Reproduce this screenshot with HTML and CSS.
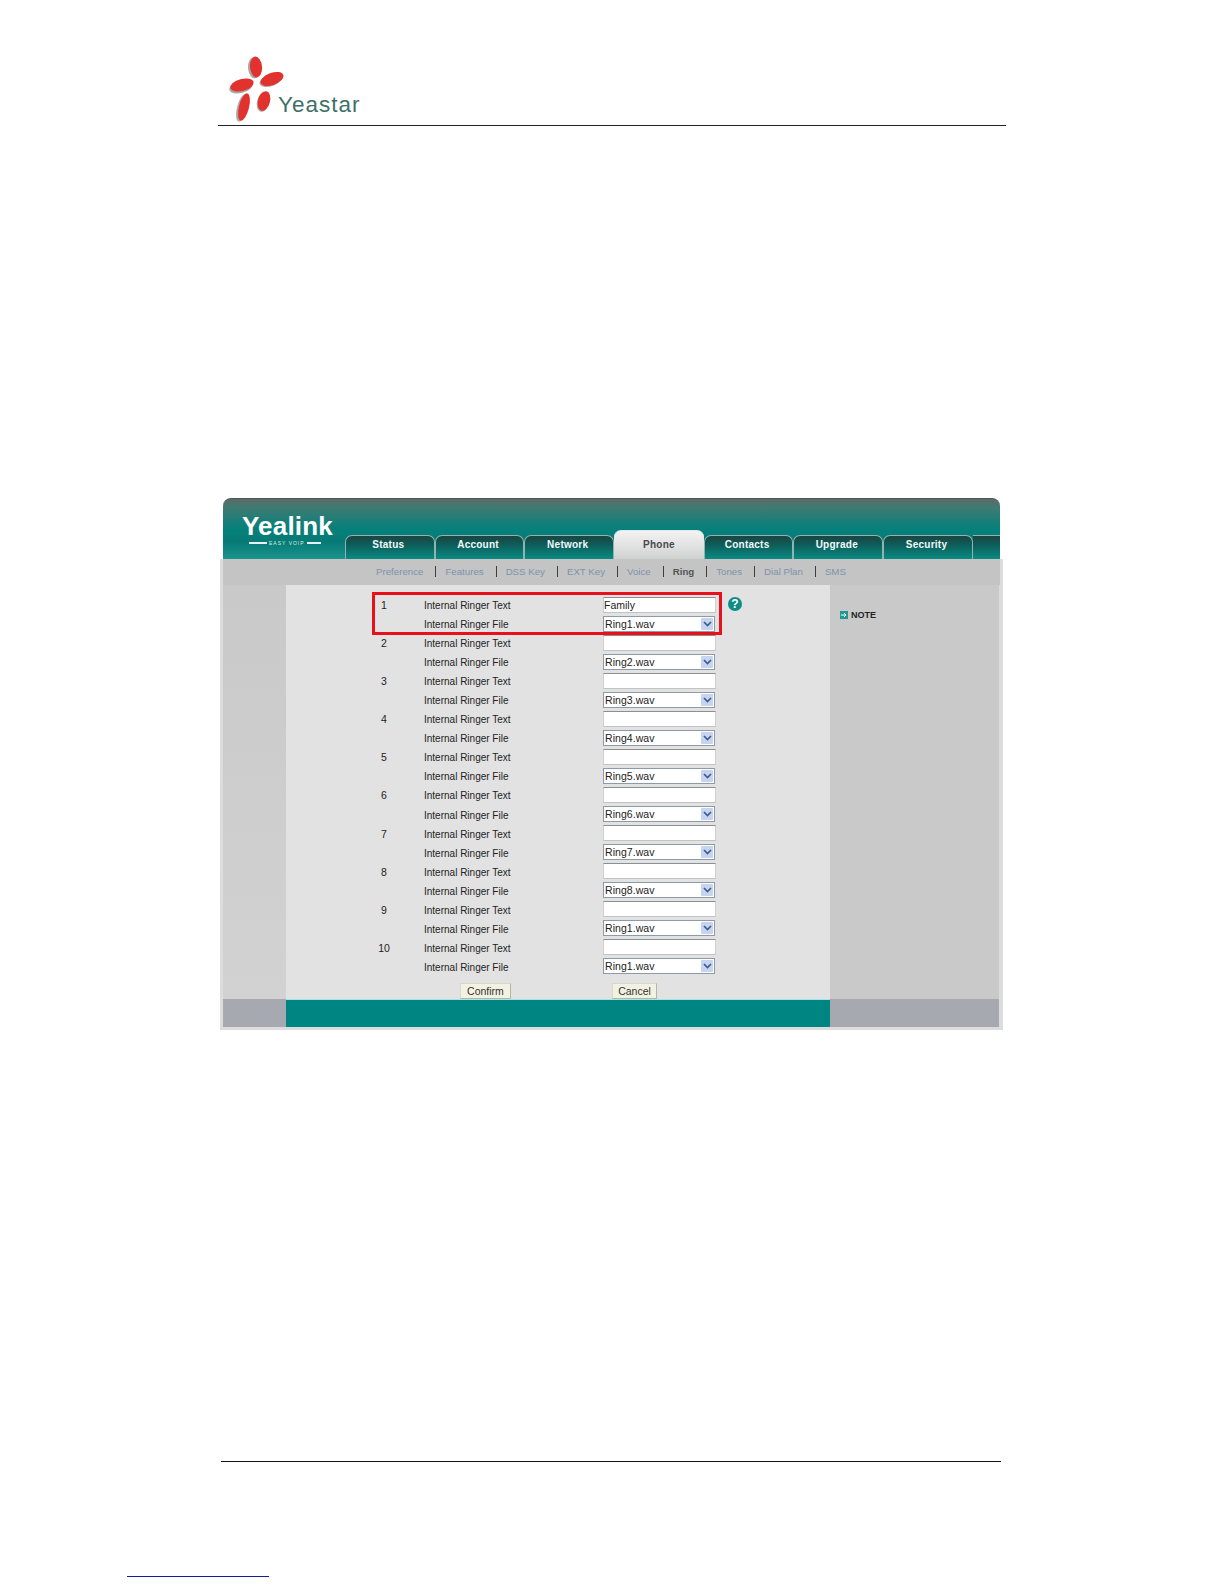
FILE: index.html
```html
<!DOCTYPE html>
<html lang="en">
<head>
<meta charset="utf-8">
<title>Yeastar - Ring settings</title>
<link rel="stylesheet" href="styles.css">
</head>
<body>
<div class="page">
  <header class="doc-head">
    <div class="brand">
      <svg class="brand-mark" width="60" height="74" viewBox="0 0 60 74">
        <g fill="#a9a9a9">
          <ellipse cx="29" cy="17" rx="6" ry="10.5" transform="rotate(-5 29 17)"/>
          <ellipse cx="46" cy="29" rx="12" ry="6" transform="rotate(-20 46 29)"/>
          <ellipse cx="16" cy="36" rx="12" ry="6" transform="rotate(-15 16 36)"/>
          <ellipse cx="17" cy="57" rx="5" ry="14" transform="rotate(14 17 57)"/>
          <ellipse cx="38" cy="51" rx="6" ry="10" transform="rotate(15 38 51)"/>
        </g>
        <g fill="#e1322e">
          <ellipse cx="31" cy="16" rx="6" ry="10.5" transform="rotate(-5 31 16)"/>
          <ellipse cx="47" cy="28" rx="12" ry="6" transform="rotate(-20 47 28)"/>
          <ellipse cx="17" cy="34" rx="12" ry="6" transform="rotate(-15 17 34)"/>
          <ellipse cx="19" cy="56" rx="5" ry="14" transform="rotate(14 19 56)"/>
          <ellipse cx="39" cy="50" rx="6" ry="10" transform="rotate(15 39 50)"/>
        </g>
      </svg>
      <span class="brand-name">Yeastar</span>
    </div>
  </header>

  <div class="shot">
    <div class="topbar">
      <div class="logo">
        <div class="logo-word">Yealink</div>
        <div class="logo-sub"><i class="logo-bar"></i><span>EASY VOIP</span><i class="logo-bar short"></i></div>
      </div>
      <nav class="tabs">
        <div class="tab">Status</div>
        <div class="tab">Account</div>
        <div class="tab">Network</div>
        <div class="tab active">Phone</div>
        <div class="tab">Contacts</div>
        <div class="tab">Upgrade</div>
        <div class="tab">Security</div>
        <div class="tab-tail"></div>
      </nav>
    </div>

    <nav class="subnav">
      <span class="sub">Preference</span><i class="sep"></i>
      <span class="sub">Features</span><i class="sep"></i>
      <span class="sub">DSS Key</span><i class="sep"></i>
      <span class="sub">EXT Key</span><i class="sep"></i>
      <span class="sub">Voice</span><i class="sep"></i>
      <span class="sub current">Ring</span><i class="sep"></i>
      <span class="sub">Tones</span><i class="sep"></i>
      <span class="sub">Dial Plan</span><i class="sep"></i>
      <span class="sub">SMS</span>
    </nav>

    <div class="body">
      <div class="side-left"></div>
      <main class="center">
        <div class="highlight"></div>
        <div class="help">?</div>
        <div class="rows">
          <span class="num">1</span><span class="lbl">Internal Ringer Text</span><div class="input">Family</div>
          <span class="num"></span><span class="lbl">Internal Ringer File</span><div class="select"><span class="val">Ring1.wav</span><span class="arrow"><svg width="9" height="6" viewBox="0 0 9 6"><path d="M1 1l3.5 3.5L8 1" fill="none" stroke="#3f5c8f" stroke-width="1.7"/></svg></span></div>

          <span class="num">2</span><span class="lbl">Internal Ringer Text</span><div class="input"></div>
          <span class="num"></span><span class="lbl">Internal Ringer File</span><div class="select"><span class="val">Ring2.wav</span><span class="arrow"><svg width="9" height="6" viewBox="0 0 9 6"><path d="M1 1l3.5 3.5L8 1" fill="none" stroke="#3f5c8f" stroke-width="1.7"/></svg></span></div>

          <span class="num">3</span><span class="lbl">Internal Ringer Text</span><div class="input"></div>
          <span class="num"></span><span class="lbl">Internal Ringer File</span><div class="select"><span class="val">Ring3.wav</span><span class="arrow"><svg width="9" height="6" viewBox="0 0 9 6"><path d="M1 1l3.5 3.5L8 1" fill="none" stroke="#3f5c8f" stroke-width="1.7"/></svg></span></div>

          <span class="num">4</span><span class="lbl">Internal Ringer Text</span><div class="input"></div>
          <span class="num"></span><span class="lbl">Internal Ringer File</span><div class="select"><span class="val">Ring4.wav</span><span class="arrow"><svg width="9" height="6" viewBox="0 0 9 6"><path d="M1 1l3.5 3.5L8 1" fill="none" stroke="#3f5c8f" stroke-width="1.7"/></svg></span></div>

          <span class="num">5</span><span class="lbl">Internal Ringer Text</span><div class="input"></div>
          <span class="num"></span><span class="lbl">Internal Ringer File</span><div class="select"><span class="val">Ring5.wav</span><span class="arrow"><svg width="9" height="6" viewBox="0 0 9 6"><path d="M1 1l3.5 3.5L8 1" fill="none" stroke="#3f5c8f" stroke-width="1.7"/></svg></span></div>

          <span class="num">6</span><span class="lbl">Internal Ringer Text</span><div class="input"></div>
          <span class="num"></span><span class="lbl">Internal Ringer File</span><div class="select"><span class="val">Ring6.wav</span><span class="arrow"><svg width="9" height="6" viewBox="0 0 9 6"><path d="M1 1l3.5 3.5L8 1" fill="none" stroke="#3f5c8f" stroke-width="1.7"/></svg></span></div>

          <span class="num">7</span><span class="lbl">Internal Ringer Text</span><div class="input"></div>
          <span class="num"></span><span class="lbl">Internal Ringer File</span><div class="select"><span class="val">Ring7.wav</span><span class="arrow"><svg width="9" height="6" viewBox="0 0 9 6"><path d="M1 1l3.5 3.5L8 1" fill="none" stroke="#3f5c8f" stroke-width="1.7"/></svg></span></div>

          <span class="num">8</span><span class="lbl">Internal Ringer Text</span><div class="input"></div>
          <span class="num"></span><span class="lbl">Internal Ringer File</span><div class="select"><span class="val">Ring8.wav</span><span class="arrow"><svg width="9" height="6" viewBox="0 0 9 6"><path d="M1 1l3.5 3.5L8 1" fill="none" stroke="#3f5c8f" stroke-width="1.7"/></svg></span></div>

          <span class="num">9</span><span class="lbl">Internal Ringer Text</span><div class="input"></div>
          <span class="num"></span><span class="lbl">Internal Ringer File</span><div class="select"><span class="val">Ring1.wav</span><span class="arrow"><svg width="9" height="6" viewBox="0 0 9 6"><path d="M1 1l3.5 3.5L8 1" fill="none" stroke="#3f5c8f" stroke-width="1.7"/></svg></span></div>

          <span class="num">10</span><span class="lbl">Internal Ringer Text</span><div class="input"></div>
          <span class="num"></span><span class="lbl">Internal Ringer File</span><div class="select"><span class="val">Ring1.wav</span><span class="arrow"><svg width="9" height="6" viewBox="0 0 9 6"><path d="M1 1l3.5 3.5L8 1" fill="none" stroke="#3f5c8f" stroke-width="1.7"/></svg></span></div>
        </div>
        <div class="actions">
          <div class="btn btn-confirm">Confirm</div>
          <div class="btn btn-cancel">Cancel</div>
        </div>
      </main>
      <aside class="side-right">
        <div class="note">
          <svg width="8" height="8" viewBox="0 0 8 8"><rect width="8" height="8" fill="#1f9a93"/><path d="M1 4h4.5M4 2l2 2-2 2" fill="none" stroke="#fff" stroke-width="1"/></svg>
          <span>NOTE</span>
        </div>
      </aside>
    </div>

    <div class="bottom">
      <div class="bottom-left"></div>
      <div class="bottom-mid"></div>
      <div class="bottom-right"></div>
    </div>
  </div>

  <div class="foot-rule"></div>
  <div class="foot-link"></div>
</div>
</body>
</html>
```

FILE: styles.css
```css
* { box-sizing: border-box; }
html, body { margin: 0; padding: 0; background: #fff; }
body { font-family: "Liberation Sans", Arial, sans-serif; color: #222; }
.page { width: 1224px; height: 1584px; overflow: hidden; padding-top: 52px; }

/* document header */
.doc-head { margin-left: 218px; width: 788px; height: 74px; border-bottom: 1px solid #222; }
.brand { display: flex; align-items: flex-end; padding-left: 7px; height: 73px; }
.brand-mark { flex: none; }
.brand-name { font-size: 22.5px; line-height: 26px; color: #3f6f69; letter-spacing: 1px; margin: 0 0 7px -7px; }

/* screenshot frame */
.shot {
  margin: 372px 0 0 220px; width: 783px; height: 532px; padding: 0 3px 3px;
  background: linear-gradient(#fff 61px, #dcdcdc 61px);
}
.topbar {
  height: 61px; display: flex; align-items: flex-end; border-radius: 8px 8px 0 0;
  background: linear-gradient(#5a6b64 0, #3f7a73 14%, #06807b 50%, #087a75 72%, #1b948e 100%);
  border-top: 1px solid #4b5a54;
}
.logo { width: 122px; height: 100%; flex: none; padding: 14px 0 0 19px; color: #fff; }
.logo-word { font-size: 26px; line-height: 26px; font-weight: 700; letter-spacing: .2px; }
.logo-sub { display: flex; align-items: center; gap: 2px; margin-top: 1px; padding-left: 7px; font-size: 5px; line-height: 6px; letter-spacing: 1px; color: #d8efed; }
.logo-bar { display: block; width: 18px; height: 2px; background: #e6f3f2; }
.logo-bar.short { width: 14px; }
.tabs { display: flex; align-items: flex-end; flex: 1; height: 100%; }
.tab {
  width: 89.7px; height: 24px; flex: none; text-align: center; font-size: 10px; font-weight: 700;
  letter-spacing: .25px; line-height: 18px; padding-right: 3px; color: #f2fafa;
  border: 1px solid #8fb5b2; border-bottom: 0; border-radius: 7px 7px 0 0;
  background: linear-gradient(#1d4442 0, #0c5f5b 40%, #0b8a84 100%);
}
.tab.active {
  height: 29px; line-height: 27px; padding-right: 0; color: #4a4a4a; border-color: #e4e8e7; border-width: 1px 0 0;
  background: linear-gradient(#f2f2f2 0, #e6e6e6 40%, #cfd2d1 100%);
}
.tab-tail {
  flex: 1; height: 24px; border-top: 1px solid #8fb5b2;
  background: linear-gradient(#1d4442 0, #0c5f5b 40%, #0b8a84 100%);
}

/* secondary nav */
.subnav {
  height: 26px; background: #c4c4c4; display: flex; align-items: center; padding: 0 0 2px 153px;
  font-size: 9.7px; color: #7e93ac; gap: 9px;
}
.sub { flex: none; }
.sub.current { color: #555; font-weight: 700; }
.sep { width: 1px; height: 11px; margin-left: 3px; background: #3e3e3e; flex: none; }

/* main body */
.body { display: flex; height: 414px; }
.side-left { width: 63px; background: linear-gradient(#c9c9c9, #d2d2d2); }
.center { width: 544px; background: #e2e2e2; position: relative; }
.side-right { width: 169px; background: #c9c9c9; padding: 25px 0 0 10px; }
.highlight {
  position: absolute; left: 86px; top: 7px; width: 350px; height: 43px;
  border: 3px solid #e8101a; pointer-events: none;
}
.help {
  position: absolute; left: 442px; top: 12px; width: 14px; height: 14px; border-radius: 50%;
  background: #0f8c86; color: #fff; font-size: 12px; font-weight: 700; line-height: 14px; text-align: center;
}
.rows {
  display: grid; grid-template-columns: 56px 191px 114px; grid-auto-rows: 19.05px;
  padding: 11px 0 0 70px; font-size: 10px; align-items: center;
}
.num { text-align: center; font-size: 10.5px; margin-top: -1px; }
.lbl { padding-left: 12px; }
.input {
  height: 16px; width: 113px; margin-top: -2px; background: #fff; border: 1px solid #9a9a9a; border-color: #8a8f94 #d0d0d0 #c2c2c2 #d0d0d0;
  font-size: 10.5px; line-height: 15px; color: #222;
}
.select {
  height: 16px; width: 112px; margin-top: -2px; background: #fff; border: 1px solid #8b9bab; display: flex; align-items: center;
  justify-content: space-between; font-size: 10.5px; padding: 0 1px;
}
.val { letter-spacing: .05px; }
.arrow {
  width: 12px; height: 12px; background: #c6d3f1; border-radius: 1px; display: flex; align-items: center; justify-content: center;
}
.actions { display: flex; gap: 101px; padding: 6px 0 0 174px; }
.btn {
  height: 16px; background: #f3f2e2; border: 1px solid #c9c9b4; border-color: #d9d9c9 #b5b5a0 #b5b5a0 #d9d9c9;
  font-size: 10.5px; line-height: 15px; text-align: center; color: #333;
}
.btn-confirm { width: 51px; }
.btn-cancel { width: 45px; }
.note { display: flex; align-items: center; gap: 3px; font-size: 9px; font-weight: 700; color: #222; height: 10px; }

/* bottom band */
.bottom { display: flex; height: 28px; }
.bottom-left { width: 63px; background: #a6aab0; }
.bottom-mid { width: 544px; background: #008582; border-top: 1px solid #a5e4e2; }
.bottom-right { width: 169px; background: #a6aab0; }

/* document footer */
.foot-rule { margin: 431px 0 0 221px; width: 780px; height: 1px; background: #111; }
.foot-link { margin: 114px 0 0 127px; width: 142px; height: 1px; background: #10209a; }
```
